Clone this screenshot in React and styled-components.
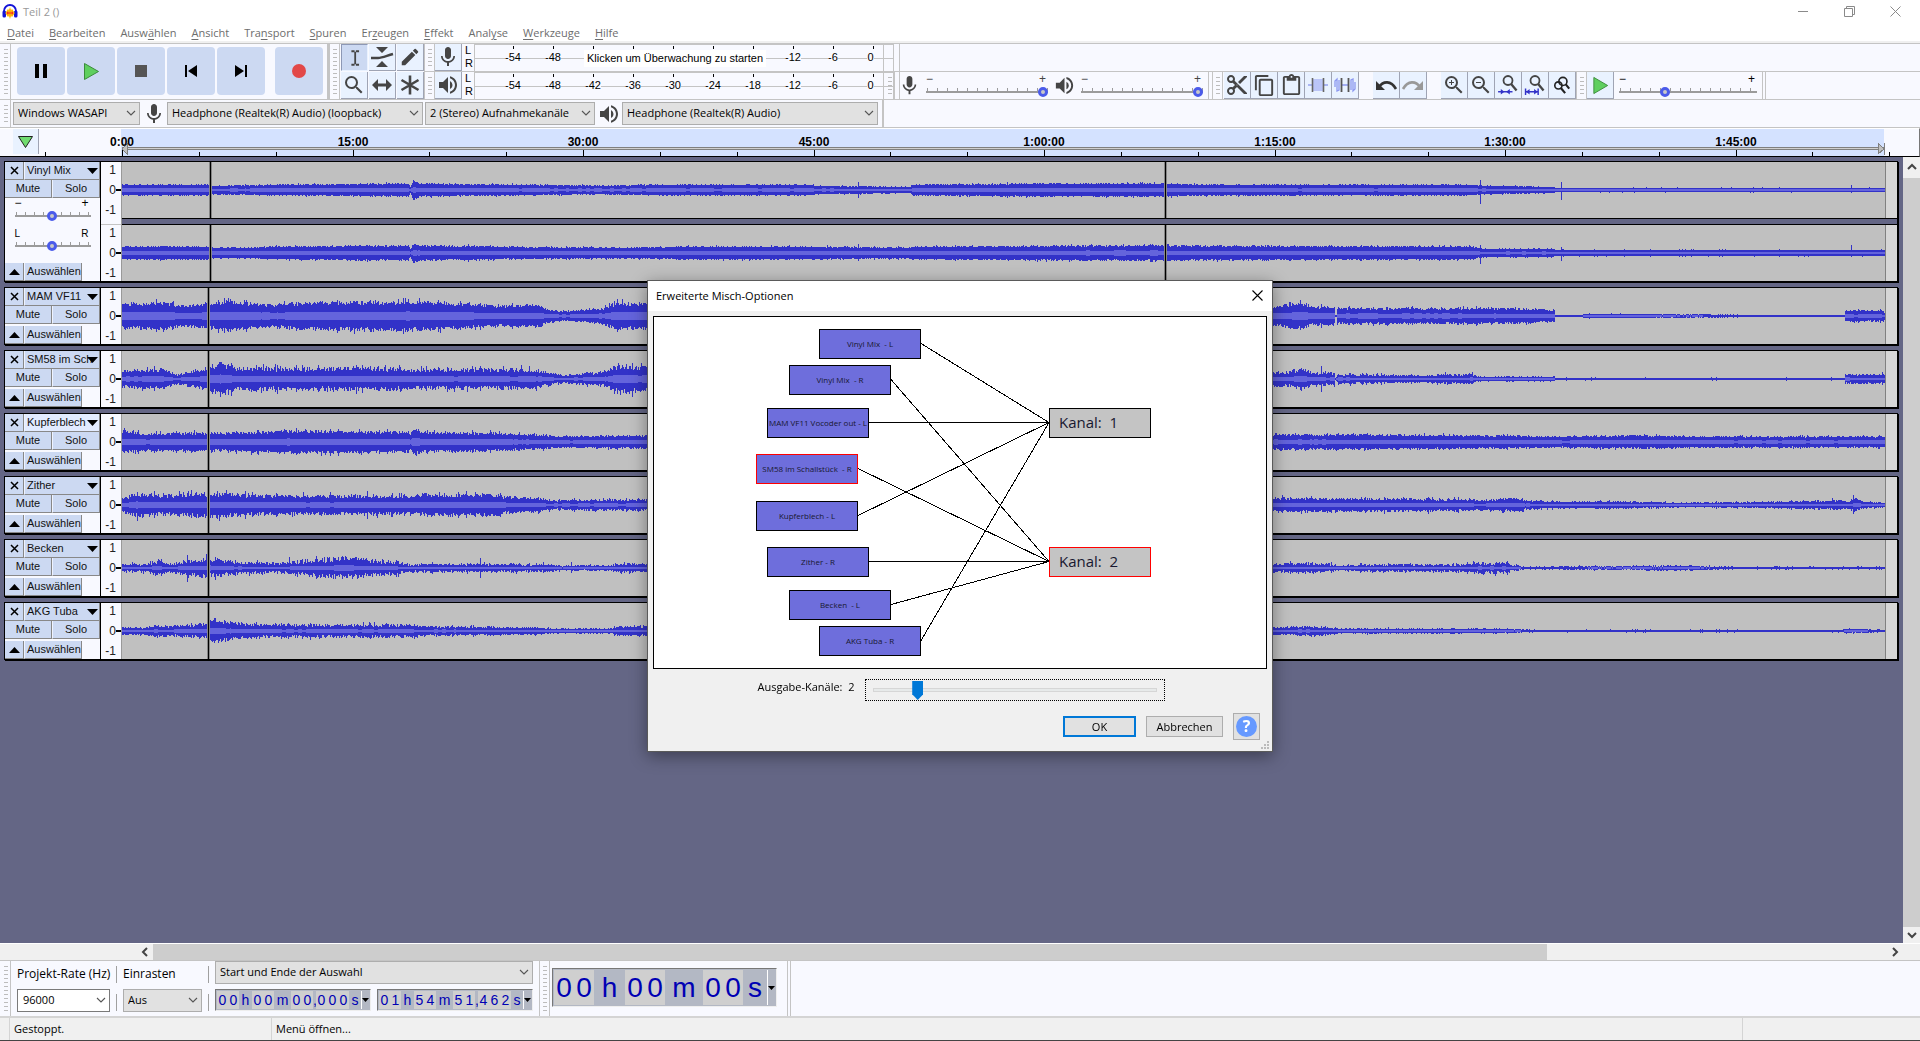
import React from 'react';
import styled, { createGlobalStyle, css } from 'styled-components';
import {
  MdMic,
  MdVolumeUp,
  MdContentCut,
  MdContentCopy,
  MdContentPaste,
  MdZoomIn,
  MdZoomOut,
  MdSearch,
  MdEdit,
} from 'react-icons/md';

const UI = '"Open Sans", "Noto Sans", sans-serif';
const SANS = '"Liberation Sans", Arial, sans-serif';

const LINE = '#c4c4c4';
const PANEL = '#f8f9ff';
const BUTTON = '#ccd9f2';
const SLATE = '#646685';
const ICON = '#454545';

const GlobalStyle = createGlobalStyle`
  *, *::before, *::after { box-sizing: border-box; }
  body {
    margin: 0;
    font-family: ${UI};
    font-size: 11px;
    color: #000;
    overflow: hidden;
  }
  button, input, select {
    font: inherit;
    color: inherit;
    margin: 0;
    padding: 0;
    border: 0;
    background: none;
    border-radius: 0;
  }
  svg { display: block; flex: none; }
`;

/* ---------- window ---------- */

const Window = styled.div`
  display: flex;
  flex-direction: column;
  height: 100vh;
  background: #fff;
  border-bottom: 1px solid #444;
`;

const TitleBar = styled.header`
  display: flex;
  align-items: center;
  gap: 5px;
  height: 24px;
  padding: 0 0 2px 2px;
  color: #999;
`;

const WindowButtons = styled.div`
  display: flex;
  margin-left: auto;
  padding-right: 2px;
`;

const WindowButton = styled.button`
  display: flex;
  align-items: center;
  justify-content: center;
  width: 46px;
  height: 22px;
  color: #8a8a8a;
`;

const MenuBar = styled.nav`
  display: flex;
  gap: 1px;
  height: 19px;
  border-bottom: 2px solid #f0f0f0;
`;

const MenuItem = styled.button`
  padding: 0 7px;
  line-height: 17px;
  color: #6d6d6d;
  u { text-underline-offset: 2px; }
`;

/* ---------- toolbar dock ---------- */

const Dock = styled.div`
  display: flex;
  height: 85px;
  background: ${PANEL};
  border-top: 1px solid ${LINE};
  border-bottom: 1px solid ${LINE};
`;

const LeftDock = styled.div`
  display: flex;
  flex-direction: column;
  flex: none;
  width: 884px;
  border-right: 1px solid ${LINE};
`;

const DockRow = styled.div`
  display: flex;
  height: ${p => p.$height}px;
  border-bottom: ${p => (p.$last ? 'none' : `1px solid ${LINE}`)};
`;

const RightDock = styled.div`
  flex: 1;
  display: grid;
  grid-template-rows: 27px 29px 27px;
`;

const MiddleRow = styled.div`
  display: flex;
  border-top: 1px solid ${LINE};
  border-bottom: 1px solid ${LINE};
`;

const Grabber = styled.div`
  flex: none;
  width: 11px;
  border-right: 1px solid ${LINE};
  border-left: 1px solid ${p => (p.$first ? 'transparent' : LINE)};
  background: repeating-linear-gradient(#bcbcbc 0 1px, transparent 1px 4px) center / 4px calc(100% - 10px) no-repeat;
`;

const Transport = styled.div`
  display: flex;
  align-items: center;
  gap: 2px;
  padding: 0 4px 1px 6px;
  border-right: 2px solid ${LINE};
`;

const TransportButton = styled.button`
  display: flex;
  align-items: center;
  justify-content: center;
  width: 48px;
  height: 48px;
  margin-left: ${p => (p.$apart ? 8 : 0)}px;
  border-radius: 4px;
  background: ${BUTTON};
`;

const Tools = styled.div`
  display: grid;
  grid-template-columns: repeat(3, 27px);
  grid-template-rows: repeat(2, 27px);
  gap: 1px;
  padding-left: 1px;
`;

const ToolButton = styled.button`
  display: flex;
  align-items: center;
  justify-content: center;
  flex: none;
  width: 27px;
  height: 27px;
  color: ${ICON};
  background: ${p => (p.$active ? BUTTON : '#e9f2ff')};
  border-right: 1px solid #9fa4b4;
  border-bottom: 1px solid #9fa4b4;
  ${p => p.$active && css`
    border: 1px solid #8d98b5;
    border-right-color: #e9f2ff;
    border-bottom-color: #e9f2ff;
  `}
`;

const Meters = styled.div`
  flex: 1;
  display: flex;
  flex-direction: column;
  border-right: 1px solid ${LINE};
`;

const MeterRow = styled.div`
  display: flex;
  height: 28px;
  padding-right: 5px;
  border-bottom: ${p => (p.$last ? 'none' : `1px solid ${LINE}`)};
`;

const MeterSide = styled.div`
  display: flex;
  flex-direction: column;
  width: 12px;
  padding-left: 3px;
  font: 11px/13px ${SANS};
`;

const MeterBox = styled.div`
  position: relative;
  flex: 1;
  border-left: 1px solid ${LINE};
  border-right: 1px solid ${LINE};
  border-top: 1px solid ${LINE};
  background: linear-gradient(${LINE}, ${LINE}) 0 13px / 100% 1px no-repeat;
`;

const MeterScale = styled.div`
  display: grid;
  grid-template-columns: repeat(10, 40px);
  padding-left: 18px;
  font: 11px/16px ${SANS};
  text-align: center;
`;

const MeterMark = styled.span`
  display: flex;
  flex-direction: column;
  align-items: center;
  &::before {
    content: '';
    width: 1px;
    height: 3px;
    margin-top: 1px;
    background: #000;
  }
  span { background: ${PANEL}; line-height: 11px; margin-top: 3px; }
  &:last-child span { margin-right: 5px; }
`;

const MeterHint = styled.button`
  position: absolute;
  left: 109px;
  top: 5px;
  width: 182px;
  height: 17px;
  background: #fff;
  font: 11px/15px ${SANS};
`;

const DeviceRow = styled.div`
  display: flex;
  align-items: center;
  flex: 1;
  padding: 0 3px 0 2px;
  border-right: 1px solid ${LINE};
`;

const DeviceIcon = styled.span`
  display: flex;
  justify-content: center;
  width: ${p => p.$width}px;
  color: ${ICON};
`;

/* ---------- form controls ---------- */

const SelectWrap = styled.span`
  position: relative;
  display: block;
  flex: none;
  width: ${p => p.$width}px;
  svg {
    position: absolute;
    right: 4px;
    top: 8px;
    pointer-events: none;
  }
`;

const fieldStyle = css`
  appearance: none;
  display: block;
  width: 100%;
  height: 23px;
  padding: 0 18px 1px 4px;
  line-height: 20px;
  border: 1px solid #adadad;
  background: #e1e1e1;
`;

const SelectBox = styled.select`
  ${fieldStyle}
`;

const ComboInput = styled.input`
  ${fieldStyle}
  padding: 0 18px 2px 5px;
  border-color: #7a7a7a;
  background: #fff;
`;

const SliderWrap = styled.label`
  display: flex;
  flex-direction: column;
  width: ${p => p.$width}px;
  height: 23px;
`;

const SliderEnds = styled.span`
  display: flex;
  justify-content: space-between;
  height: 11px;
  padding: 0 2px 0 0;
  font: ${p => (p.$letters ? 10 : 12)}px/11px ${SANS};
`;

const Range = styled.input`
  appearance: none;
  display: block;
  width: 100%;
  height: 12px;
  background:
    linear-gradient(#9b9b9b, #9b9b9b) 0 6px / 100% 2px no-repeat,
    repeating-linear-gradient(90deg, #9b9b9b 0 1px, transparent 1px ${p => p.$pitch}px) 1px 3px / 100% 4px no-repeat;
  &::-webkit-slider-thumb {
    appearance: none;
    width: 10px;
    height: 10px;
    margin-top: 2px;
    border: 3px solid #4b5bea;
    border-radius: 5px;
    background: #c8c8c8;
  }
`;

function Chevron() {
  return (
    <svg width="10" height="7" viewBox="0 0 10 7">
      <path d="M1 1l4 4 4-4" fill="none" stroke="#555" strokeWidth="1.1" />
    </svg>
  );
}

function Select({ label, width, children }) {
  return (
    <SelectWrap $width={width}>
      <SelectBox aria-label={label}>
        <option>{children}</option>
      </SelectBox>
      <Chevron />
    </SelectWrap>
  );
}

function Slider({ label, width, pitch, value, ends = ['−', '+'] }) {
  return (
    <SliderWrap $width={width}>
      <SliderEnds $letters={ends[0] === 'L'}>
        <span>{ends[0]}</span>
        <span>{ends[1]}</span>
      </SliderEnds>
      <Range type="range" aria-label={label} $pitch={pitch} defaultValue={value} />
    </SliderWrap>
  );
}

/* ---------- icons ---------- */

function AppIcon() {
  return (
    <svg width="16" height="16" viewBox="0 0 16 16">
      <path d="M2 10V8a6 6 0 0 1 12 0v2" fill="none" stroke="#1414d8" strokeWidth="1.8" />
      <rect x="0.5" y="7.5" width="3.5" height="7" rx="1.5" fill="#1414d8" />
      <rect x="12" y="7.5" width="3.5" height="7" rx="1.5" fill="#1414d8" />
      <path d="M4 10l2-3 1 2 1-3 1 3 1-2 2 3-2 3-1-2-1 3-1-3-1 2z" fill="#f22" stroke="#fb0" strokeWidth="1.2" />
    </svg>
  );
}

const transportIcons = {
  pause: <path d="M1 0h4v14H1zM9 0h4v14H9z" fill="#000" />,
  play: <path d="M0.5 -0.5l14 8-14 8z" fill="#5fcf5f" stroke="#3c8c3c" />,
  stop: <path d="M1 1h12v12H1z" fill="#555" />,
  start: <path d="M1 1h2v12H1zM13 1v12L4 7z" fill="#000" />,
  end: <path d="M11 1h2v12h-2zM1 1v12l9-6z" fill="#000" />,
  record: <circle cx="7" cy="7" r="7" fill="#e24848" />,
};

function TransportIcon({ name }) {
  return (
    <svg width="14" height="14" viewBox="0 0 14 14" overflow="visible">
      {transportIcons[name]}
    </svg>
  );
}

const drawings = {
  ibeam: (
    <path d="M6 2.5h3.5M11 2.5h3.5M6 17.5h3.5M11 17.5h3.5M10.2 3v14" fill="none" stroke={ICON} strokeWidth="2" />
  ),
  envelope: (
    <g fill={ICON}>
      <path d="M4 0h12l-6 6zM4 20h12l-6-6z" />
      <path d="M-1 11h7c4 0 8-2 15-4" fill="none" stroke={ICON} strokeWidth="2.4" />
    </g>
  ),
  shift: <path d="M0 10l6-6v4.5h8V4l6 6-6 6v-4.5H6V16z" fill={ICON} />,
  multi: (
    <path d="M10 0.5v19M1.5 5l17 10M18.5 5l-17 10" fill="none" stroke={ICON} strokeWidth="2.6" />
  ),
  trim: (
    <g fill="none">
      <path d="M0 10h4M16 10h4" stroke="#6a78e6" />
      <path d="M6 4v12M8 4v12M10 4v12M12 4v12M14 4v12" stroke="#8c98f0" />
      <path d="M4.5 3v14M15.5 3v14" stroke="#666" strokeWidth="1.6" />
    </g>
  ),
  silence: (
    <g fill="none">
      <path d="M0 12V6l2-2v12l2-1V5M16 15V5l2-1v12l2-2V7M7 10h6" stroke="#8c98f0" strokeWidth="1.3" />
      <path d="M6.5 3v14M13.5 3v14" stroke="#555" strokeWidth="1.8" />
    </g>
  ),
  undo: (
    <g>
      <path d="M3 12c4-6 12-7 17 2" fill="none" stroke="#333" strokeWidth="2.6" />
      <path d="M0 6v9h9z" fill="#333" />
    </g>
  ),
  redo: (
    <g>
      <path d="M17 12C13 6 5 5 0 14" fill="none" stroke="#999" strokeWidth="2.6" />
      <path d="M20 6v9h-9z" fill="#999" />
    </g>
  ),
  fitSelection: (
    <g fill="none">
      <circle cx="10" cy="5" r="5" stroke={ICON} strokeWidth="2" />
      <path d="M13.5 9l6 7" stroke={ICON} strokeWidth="2.6" />
      <path d="M-1 17.5h16" stroke="#3232c8" strokeWidth="1.6" />
      <path d="M2 14.5v6l4-3zM12 14.5v6l-4-3z" fill="#3232c8" />
    </g>
  ),
  fitProject: (
    <g fill="none">
      <circle cx="10" cy="5" r="5" stroke={ICON} strokeWidth="2" />
      <path d="M13.5 9l6 7" stroke={ICON} strokeWidth="2.6" />
      <path d="M0 17.5h13M-0.5 14v7M13.5 14v7" stroke="#3232c8" strokeWidth="1.6" />
      <path d="M4 14.5v6l-4-3zM9 14.5v6l4-3z" fill="#3232c8" />
    </g>
  ),
  zoomToggle: (
    <g fill="none" stroke="#222" strokeWidth="1.8">
      <circle cx="6" cy="10.5" r="4" />
      <circle cx="11" cy="6" r="4.5" />
      <path d="M14 9l4 5M8.5 13l5 6" strokeWidth="2.4" />
    </g>
  ),
  play: <path d="M3 1.5l14.5 8.5L3 18.5z" fill="#5fcf5f" stroke="#3c8c3c" />,
};

function Drawing({ name, size = 20 }) {
  return (
    <svg width={size} height={size} viewBox="0 0 20 20" overflow="visible">
      {drawings[name]}
    </svg>
  );
}

/* ---------- time ruler ---------- */

const RulerRow = styled.div`
  display: flex;
  height: 29px;
  background: ${PANEL};
  border-top: 1px solid #fff;
  border-bottom: 1px solid #000;
  border-right: 1px solid #777;
`;

const PinButton = styled.button`
  display: flex;
  align-items: center;
  justify-content: center;
  width: 26px;
  height: 25px;
  margin-left: 13px;
  background: #e9f2ff;
  border-right: 1px solid #9fa4b4;
`;

const hours = ['0:00', '15:00', '30:00', '45:00', '1:00:00', '1:15:00', '1:30:00', '1:45:00'];
const tickX = i => Math.round(83 + i * 76.84);

function TimeRuler() {
  return (
    <svg width="1860" height="27" fontFamily={SANS} fontSize="12" fontWeight="bold" shapeRendering="crispEdges">
      <rect x="82" y="0" width="1763" height="27" fill="#d4e2ff" />
      <rect x="83" y="18" width="1762" height="3" fill="#808080" />
      <rect x="83" y="19" width="1762" height="1" fill="#d0d0d0" />
      <path d="M88 15v10l-5-5zM1839 14v11l6-5z" fill="#c0c0c0" stroke="#808080" />
      <path d="M1845 14v12" stroke="#808080" />
      {Array.from({ length: 25 }, (_, n) => n - 1).map(i => (
        <rect key={i} x={tickX(i)} y={i % 3 === 0 ? 21 : 23} width="1" height={i % 3 === 0 ? 6 : 4} />
      ))}
      {hours.map((h, i) => (
        <text key={h} x={tickX(i * 3)} y="17" textAnchor="middle">{h}</text>
      ))}
    </svg>
  );
}

/* ---------- tracks ---------- */

const Workspace = styled.main`
  display: flex;
  flex: 1;
  min-height: 0;
  background: ${SLATE};
`;

const TrackList = styled.div`
  flex: 1;
  min-width: 0;
  display: flex;
  flex-direction: column;
  gap: 5px;
  padding: 4px 5px 0 4px;
`;

const TrackBox = styled.section`
  display: flex;
  border: 1px solid #000;
  box-shadow: 1px 1px 0 #000;
`;

const TrackPanel = styled.div`
  display: flex;
  flex-direction: column;
  flex: none;
  width: 96px;
  background: ${PANEL};
  border-right: 1px solid #000;
  font: 11px/17px ${SANS};
`;

const TrackRow = styled.div`
  display: flex;
  height: 18px;
  margin-top: ${p => (p.$bottom ? 'auto' : 0)};
`;

const TrackButton = styled.button`
  display: flex;
  align-items: center;
  justify-content: ${p => (p.$left ? 'flex-start' : 'center')};
  flex: ${p => (p.$width ? 'none' : 1)};
  width: ${p => p.$width || 0}px;
  min-width: 0;
  padding-left: ${p => (p.$left ? 2 : 0)}px;
  white-space: nowrap;
  color: #111;
  background: ${p => (p.$hover ? '#e2ebff' : BUTTON)};
  border-right: 1px solid #888;
  border-bottom: 1px solid #888;
  & + & { border-left: 1px solid #eef3ff; }
`;

const TrackName = styled.span`
  flex: 1;
  min-width: 0;
  text-align: left;
`;

const TrackSliders = styled.div`
  display: flex;
  flex-direction: column;
  align-items: center;
  gap: 7px;
  height: 65px;
`;

const VerticalRulers = styled.div`
  flex: none;
  width: 21px;
  background: ${PANEL};
  border-right: 1px solid #999;
`;

const VerticalRuler = styled.div`
  display: grid;
  grid-template-rows: 16px 24px 16px;
  align-items: center;
  height: 56px;
  padding-right: 5px;
  text-align: right;
  font: 12px/14px ${SANS};
  color: #222;
  & + & { margin-top: 6px; border-top: 1px solid ${LINE}; height: 57px; }
`;

const ZeroMark = styled.span`
  display: flex;
  align-items: center;
  justify-content: flex-end;
  margin-right: -5px;
  &::after {
    content: '';
    width: 5px;
    height: 2px;
    background: #000;
  }
`;

const Channels = styled.div`
  flex: 1;
  min-width: 0;
  display: flex;
  flex-direction: column;
  gap: 5px;
  background: ${SLATE};
`;

const Channel = styled.div`
  display: flex;
  height: ${p => (p.$stereo ? 57 : 56)}px;
  background: #d6d6d6;
  border-top: ${p => (p.$stereo && p.$second ? '1px solid #000' : 'none')};
  border-bottom: ${p => (p.$stereo && !p.$second ? '1px solid #000' : 'none')};
`;

const Clip = styled.div`
  flex: 1;
  min-width: 0;
  margin-right: 11px;
  background: #c0c0c0;
  border-right: 1px solid #808080;
`;

const WAVE_WIDTH = 1763;
const MID = 28;

// breakpoints are [x, amplitude], spikes are [x, up, down], all in clip pixels
const tracks = [
  {
    name: 'Vinyl Mix',
    stereo: true,
    rough: 0.25,
    cuts: [88, 1043],
    channels: [
      {
        points: [[0, 5], [86, 5], [92, 4], [150, 5], [280, 6], [286, 6], [288, 3], [291, 9], [298, 6], [400, 5], [480, 4], [530, 5], [690, 5], [692, 4], [788, 3], [790, 5], [900, 6], [1040, 6], [1100, 5], [1348, 5], [1360, 4], [1431, 3], [1433, 2], [1763, 2]],
        spikes: [[736, 8, 8], [1358, 10, 14], [1439, 8, 10], [1729, 5, 3]],
      },
      {
        points: [[0, 6], [86, 6], [92, 5], [130, 5], [150, 6], [286, 7], [288, 4], [291, 9], [298, 7], [360, 6], [500, 5], [560, 6], [690, 6], [788, 5], [790, 6], [1000, 7], [1348, 6], [1360, 4], [1431, 4], [1433, 3], [1763, 3]],
        spikes: [[346, 9, 9], [736, 9, 8], [1347, 8, 6], [1358, 8, 11], [1439, 6, 8], [1729, 8, 4]],
      },
    ],
  },
  {
    name: 'MAM VF11',
    rough: 0.35,
    cuts: [86],
    channels: [{
      points: [[0, 11], [40, 12], [60, 9], [86, 11], [100, 13], [150, 10], [180, 12], [284, 13], [340, 11], [380, 9], [416, 10], [422, 7], [440, 4], [480, 7], [495, 12], [525, 11], [800, 8], [1150, 8], [1180, 12], [1190, 8], [1212, 8], [1213, 1], [1214, 1], [1215, 7], [1300, 7], [1370, 7], [1420, 6], [1432, 5], [1433, 1], [1460, 1], [1461, 2], [1660, 1], [1722, 1], [1723, 5], [1761, 5], [1763, 1]],
      spikes: [[1199, 12, 12]],
    }],
  },
  {
    name: 'SM58 im Schallstück',
    label: 'SM58 im Sch',
    rough: 0.55,
    cuts: [86],
    channels: [{
      points: [[0, 7], [40, 8], [55, 4], [85, 9], [98, 13], [115, 9], [200, 9], [270, 9], [300, 8], [410, 8], [430, 5], [440, 3], [480, 6], [497, 12], [525, 10], [800, 6], [1165, 6], [1180, 9], [1190, 5], [1212, 5], [1213, 1], [1216, 4], [1300, 3], [1325, 4], [1350, 4], [1355, 2], [1432, 2], [1433, 1], [1722, 1], [1723, 4], [1761, 4], [1763, 1]],
      spikes: [[263, 14, 8], [332, 9, 13], [1199, 13, 13], [1323, 7, 5]],
    }],
  },
  {
    name: 'Kupferblech',
    hover: true,
    rough: 0.35,
    cuts: [86],
    channels: [{
      points: [[0, 10], [20, 8], [100, 8], [170, 10], [286, 9], [288, 6], [291, 12], [300, 9], [380, 8], [440, 5], [525, 6], [1150, 7], [1350, 6], [1440, 5], [1520, 6], [1570, 5], [1763, 5]],
      spikes: [[72, 12, 10]],
    }],
  },
  {
    name: 'Zither',
    rough: 0.5,
    cuts: [86],
    channels: [{
      points: [[0, 6], [15, 10], [40, 8], [86, 10], [150, 8], [280, 8], [300, 9], [378, 9], [382, 7], [415, 6], [430, 4], [525, 5], [1150, 6], [1350, 5], [1354, 4], [1400, 6], [1403, 4], [1430, 3], [1500, 3], [1560, 2], [1660, 3], [1720, 4], [1726, 3], [1733, 6], [1740, 3], [1763, 2]],
      spikes: [[245, 14, 14], [300, 12, 7], [1731, 10, 9], [1710, 7, 4]],
    }],
  },
  {
    name: 'Becken',
    rough: 0.8,
    cuts: [86],
    channels: [{
      points: [[0, 3], [25, 3], [35, 6], [45, 3], [60, 5], [86, 7], [100, 6], [120, 4], [160, 4], [180, 6], [225, 8], [284, 4], [286, 3], [420, 3], [440, 2], [490, 2], [500, 4], [525, 3], [1150, 3], [1180, 4], [1212, 3], [1216, 2], [1260, 3], [1350, 3], [1352, 4], [1385, 4], [1390, 2], [1395, 2], [1402, 1], [1560, 2], [1610, 1], [1763, 1]],
      spikes: [[65, 13, 14], [358, 10, 10], [167, 11, 6], [219, 11, 7], [449, 6, 5], [1351, 7, 4], [1266, 5, 4]],
    }],
  },
  {
    name: 'AKG Tuba',
    rough: 0.6,
    cuts: [86],
    channels: [{
      points: [[0, 3], [20, 3], [35, 5], [50, 4], [84, 6], [90, 10], [110, 7], [150, 5], [260, 5], [290, 5], [300, 4], [416, 3], [425, 2], [485, 2], [498, 4], [525, 4], [1150, 3], [1180, 4], [1212, 3], [1216, 2], [1370, 2], [1420, 1], [1720, 1], [1723, 2], [1763, 1]],
      spikes: [[92, 13, 12], [264, 8, 7], [1199, 5, 5]],
    }],
  },
];

const noise = n => {
  const v = Math.sin(n * 12.9898) * 43758.5453;
  return v - Math.floor(v);
};

function buildWave({ points, spikes }, seed, rough) {
  let outer = '';
  let inner = '';
  let p = 0;
  for (let x = 0; x < WAVE_WIDTH; x++) {
    while (p < points.length - 2 && x >= points[p + 1][0]) p++;
    const [x0, a0] = points[p];
    const [x1, a1] = points[p + 1];
    const amp = a0 + ((a1 - a0) * (x - x0)) / (x1 - x0);
    const bump = noise(x + seed * 71) > 0.9 ? amp * rough * 0.6 : 0;
    let up = Math.max(1, Math.round(amp * (1 - rough / 3 + rough * noise(x * 3 + seed)) + bump));
    let down = Math.max(1, Math.round(amp * (1 - rough / 3 + rough * noise(x * 5 + seed * 9)) + bump));
    const spike = spikes.find(s => s[0] === x);
    if (spike) {
      up = spike[1];
      down = spike[2];
    }
    outer += `M${x} ${MID - up}h1v${up + down}h-1z`;
    const core = Math.max(1, Math.round(amp * 0.34 + (noise(Math.floor(x / 4) + seed * 3) - 0.5) * 0.5));
    if (amp > 1.4 && core < up) {
      inner += `M${x} ${MID - core}h1v${2 * core}h-1z`;
    }
  }
  return { outer, inner };
}

function Waveform({ channel, track, seed }) {
  const wave = buildWave(channel, seed, track.rough);
  return (
    <svg width="100%" height="56" viewBox="0 0 1763 56" preserveAspectRatio="none" shapeRendering="crispEdges">
      <path d={wave.outer} fill="#3232c8" />
      <path d={wave.inner} fill="#6464dc" />
      {track.cuts.map(x => (
        <g key={x}>
          <rect x={x - 1} y="0" width="3" height="56" fill="#858585" />
          <rect x={x} y="0" width="1" height="56" fill="#000" />
        </g>
      ))}
    </svg>
  );
}

function Track({ track, index }) {
  return (
    <TrackBox>
      <TrackPanel>
        <TrackRow>
          <TrackButton $width={19} aria-label="Spur schließen">
            <svg width="9" height="9" viewBox="0 0 9 9">
              <path d="M1 1l7 7M8 1l-7 7" stroke="#000" strokeWidth="1.5" />
            </svg>
          </TrackButton>
          <TrackButton $left $hover={track.hover}>
            <TrackName>{track.label || track.name}</TrackName>
            <svg width="13" height="6" viewBox="0 0 13 6">
              <path d="M1 0h11L6.500 6z" />
            </svg>
          </TrackButton>
        </TrackRow>
        <TrackRow>
          <TrackButton>Mute</TrackButton>
          <TrackButton>Solo</TrackButton>
        </TrackRow>
        {track.stereo && (
          <TrackSliders>
            <Slider label="Verstärkung" width={76} pitch={9} value={49} />
            <Slider label="Balance" width={76} pitch={9} value={49} ends={['L', 'R']} />
          </TrackSliders>
        )}
        <TrackRow $bottom>
          <TrackButton $width={19} aria-label="Zusammenklappen">
            <svg width="11" height="6" viewBox="0 0 11 6">
              <path d="M0 6h11L5.500 0z" />
            </svg>
          </TrackButton>
          <TrackButton $width={58} $left>Auswählen</TrackButton>
        </TrackRow>
      </TrackPanel>
      <VerticalRulers>
        {track.channels.map((c, i) => (
          <VerticalRuler key={i}>
            <span>1</span>
            <ZeroMark>0</ZeroMark>
            <span>-1</span>
          </VerticalRuler>
        ))}
      </VerticalRulers>
      <Channels>
        {track.channels.map((c, i) => (
          <Channel key={i} $stereo={track.stereo} $second={i === 1}>
            <Clip>
              <Waveform channel={c} track={track} seed={index * 2 + i + 1} />
            </Clip>
          </Channel>
        ))}
      </Channels>
    </TrackBox>
  );
}

/* ---------- scroll bars ---------- */

const VScroll = styled.div`
  display: flex;
  flex-direction: column;
  flex: none;
  width: 17px;
  background: #f0f0f0;
`;

const HScroll = styled.div`
  display: flex;
  height: 17px;
  padding-left: 136px;
  background: #f0f0f0;
  border-top: 1px solid #fff;
`;

const ScrollArrow = styled.button`
  display: flex;
  align-items: center;
  justify-content: center;
  flex: none;
  width: 17px;
  height: ${p => (p.$tall ? 21 : 16)}px;
`;

const ScrollThumb = styled.div`
  flex: ${p => p.$grow};
  background: #cdcdcd;
`;

const ScrollRest = styled.div`
  flex: ${p => p.$grow};
`;

const arrows = { up: 'M1 6l4-4 4 4', down: 'M1 3l4 4 4-4', left: 'M7 1l-4 4 4 4', right: 'M3 1l4 4-4 4' };

function Arrow({ dir }) {
  return (
    <svg width="10" height="10" viewBox="0 0 10 10">
      <path d={arrows[dir]} fill="none" stroke="#444" strokeWidth="2" />
    </svg>
  );
}

/* ---------- selection bar ---------- */

const BottomBar = styled.div`
  display: flex;
  height: 58px;
  background: ${PANEL};
  border-top: 1px solid ${LINE};
  border-bottom: 2px solid #d4d4d4;
`;

const SelectionGrid = styled.div`
  display: grid;
  grid-template-columns: 93px 13px 79px 13px 318px;
  grid-template-rows: 28px 27px;
  padding: 0 6px;
  font-size: 12px;
  line-height: 26px;
  white-space: nowrap;
  ${SelectBox}, ${ComboInput} { font-size: 11px; }
`;

const Divider = styled.span`
  width: 1px;
  height: 17px;
  margin: 5px 6px;
  background: #a0a0a0;
`;

const TimePair = styled.div`
  display: flex;
  justify-content: space-between;
  align-items: start;
`;

const TimeField = styled.div`
  display: flex;
  height: ${p => p.$size + 8}px;
  border: 1px solid #777;
  border-right-color: #eee;
  border-bottom-color: #eee;
  padding: 1px;
  background: #b3b8c4;
  color: #0000b4;
  font: ${p => (p.$big ? 28 : 14)}px/${p => p.$size + 4}px ${SANS};
`;

const Cell = styled.span`
  width: ${p => p.$width}px;
  text-align: center;
  background: ${p => (p.$digit ? '#cfcfcf' : 'none')};
`;

const TimeMenu = styled.button`
  display: flex;
  align-items: center;
  justify-content: center;
  width: 8px;
  border-left: 1px solid #fff;
  background: #b3b8c4;
`;

const TimeBar = styled.div`
  display: flex;
  align-items: center;
  padding: 0 10px 2px 2px;
  border-right: 1px solid ${LINE};
`;

const BarEnd = styled.div`
  width: 3px;
  border-right: 1px solid ${LINE};
`;

function Time({ text, size, big, digit, unit }) {
  return (
    <TimeField $size={size} $big={big}>
      {text.split('').map((ch, i) => {
        const isDigit = /\d/.test(ch);
        return (
          <Cell key={i} $digit={isDigit} $width={isDigit ? digit : unit[ch]}>{ch}</Cell>
        );
      })}
      <TimeMenu aria-label="Zeitformat">
        <svg width="7" height="4" viewBox="0 0 7 4"><path d="M0 0h7L3.500 4z" /></svg>
      </TimeMenu>
    </TimeField>
  );
}

const smallUnits = { h: 13, m: 17, ',': 3, s: 12 };
const bigUnits = { h: 31, m: 38, s: 24 };

const StatusBar = styled.footer`
  display: grid;
  grid-template-columns: 9px 262px 1fr 178px;
  height: 22px;
  background: #f0f0f0;
  line-height: 21px;
`;

const StatusCell = styled.span`
  padding-left: 4px;
  border-left: 1px solid #d4d4d4;
  &:first-child { border: 0; }
`;

/* ---------- mixing dialog ---------- */

const Overlay = styled.div`
  position: fixed;
  inset: 0;
  display: flex;
  justify-content: center;
  align-items: flex-start;
  padding-top: 280px;
`;

const Dialog = styled.div`
  position: relative;
  width: 626px;
  background: #f0f0f0;
  border: 1px solid #5a5a5a;
  box-shadow: 0 4px 16px rgba(0, 0, 0, 0.4);
`;

const DialogTitle = styled.div`
  display: flex;
  align-items: center;
  justify-content: space-between;
  height: 30px;
  padding: 0 9px 2px 8px;
  background: #fff;
`;

const DialogClose = styled.button`
  width: 11px;
  height: 11px;
`;

const MixCanvas = styled.div`
  position: relative;
  height: 353px;
  margin: 5px 5px 0;
  border: 1px solid #000;
  background: #fff;
`;

const MixLines = styled.svg`
  width: 100%;
  height: 100%;
`;

const MixNode = styled.button`
  position: absolute;
  left: ${p => p.$x}px;
  top: ${p => p.$y}px;
  width: 102px;
  height: 30px;
  white-space: pre;
  font-size: ${p => (p.$output ? 15 : 8)}px;
  text-align: ${p => (p.$output ? 'left' : 'center')};
  padding: 0 0 2px ${p => (p.$output ? 9 : 0)}px;
  color: #181830;
  background: ${p => (p.$output ? '#c4c4c4' : '#6e6edc')};
  border: 1px solid ${p => (p.$selected ? '#f00' : '#000')};
`;

const ChannelRow = styled.div`
  display: flex;
  justify-content: center;
  gap: 10px;
  padding: 10px 0 0 2px;
  height: 44px;
  label { line-height: 15px; white-space: pre; }
`;

const ChannelRange = styled.input`
  appearance: none;
  width: 300px;
  height: 22px;
  padding: 0 8px;
  outline: 1px dotted #000;
  outline-offset: -1px;
  &::-webkit-slider-runnable-track {
    height: 4px;
    border: 1px solid #d6d6d6;
    background: #e7eaea;
  }
  &::-webkit-slider-thumb {
    appearance: none;
    width: 11px;
    height: 19px;
    margin-top: -8px;
    background: #0078d7;
    clip-path: polygon(0 0, 100% 0, 100% 70%, 50% 100%, 0 70%);
  }
`;

const DialogButtons = styled.div`
  display: flex;
  align-items: center;
  justify-content: flex-end;
  gap: 10px;
  padding: 0 12px 11px 0;
`;

const DialogButton = styled.button`
  width: ${p => p.$width}px;
  height: 21px;
  line-height: 15px;
  background: #e1e1e1;
  border: ${p => (p.$primary ? '2px solid #0078d7' : '1px solid #adadad')};
`;

const HelpButton = styled.button`
  width: 27px;
  height: 27px;
  padding: 2px;
  background: #e1e1e1;
  border: 1px solid #adadad;
  span {
    display: block;
    height: 21px;
    border-radius: 50%;
    background: #6699ff;
    color: #fff;
    font: bold 16px/21px ${UI};
  }
`;

const Grip = styled.svg`
  position: absolute;
  right: 3px;
  bottom: 2px;
`;

const inputs = [
  { name: 'Vinyl Mix  - L', x: 165, y: 12, out: 0 },
  { name: 'Vinyl Mix  - R', x: 135, y: 48, out: 1 },
  { name: 'MAM VF11 Vocoder out - L', x: 113, y: 91, out: 0 },
  { name: 'SM58 im Schallstück  - R', x: 102, y: 137, out: 1, selected: true },
  { name: 'Kupferblech - L', x: 102, y: 184, out: 0 },
  { name: 'Zither - R', x: 113, y: 230, out: 1 },
  { name: 'Becken  - L', x: 135, y: 273, out: 1 },
  { name: 'AKG Tuba - R', x: 165, y: 309, out: 0 },
];

const outputs = [
  { name: 'Kanal:  1', x: 395, y: 91 },
  { name: 'Kanal:  2', x: 395, y: 230, selected: true },
];

function MixDialog() {
  return (
    <Overlay>
      <Dialog role="dialog" aria-labelledby="mix-title">
        <DialogTitle>
          <span id="mix-title">Erweiterte Misch-Optionen</span>
          <DialogClose aria-label="Schließen">
            <svg width="11" height="11" viewBox="0 0 11 11">
              <path d="M0.500 0.500l10 10M10.500 0.500l-10 10" stroke="#000" strokeWidth="1.1" />
            </svg>
          </DialogClose>
        </DialogTitle>
        <MixCanvas>
          <MixLines>
            {inputs.map(n => (
              <line
                key={n.name}
                x1={n.x + 102}
                y1={n.y + 14.5}
                x2={outputs[n.out].x}
                y2={outputs[n.out].y + 14.5}
                stroke="#000"
                shapeRendering="crispEdges"
              />
            ))}
          </MixLines>
          {inputs.map(n => (
            <MixNode key={n.name} $x={n.x} $y={n.y} $selected={n.selected}>{n.name}</MixNode>
          ))}
          {outputs.map(n => (
            <MixNode key={n.name} $output $x={n.x} $y={n.y} $selected={n.selected}>{n.name}</MixNode>
          ))}
        </MixCanvas>
        <ChannelRow>
          <label htmlFor="channels">Ausgabe-Kanäle:  2</label>
          <ChannelRange id="channels" type="range" min="1" max="8" defaultValue="2" />
        </ChannelRow>
        <DialogButtons>
          <DialogButton $primary $width={73}>OK</DialogButton>
          <DialogButton $width={77}>Abbrechen</DialogButton>
          <HelpButton aria-label="Hilfe"><span>?</span></HelpButton>
        </DialogButtons>
        <Grip width="8" height="8" viewBox="0 0 8 8" fill="#bbb">
          <path d="M6 0h2v2H6zM6 3h2v2H6zM3 3h2v2H3zM6 6h2v2H6zM3 6h2v2H3zM0 6h2v2H0z" />
        </Grip>
      </Dialog>
    </Overlay>
  );
}

/* ---------- page ---------- */

// the underscore stands before the accelerator key
const menus = ['_Datei', '_Bearbeiten', 'Ausw_ählen', '_Ansicht', 'Tra_nsport', '_Spuren', 'Er_zeugen', '_Effekt', 'Anal_yse', '_Werkzeuge', '_Hilfe'];

function Menu({ text }) {
  const [before, rest] = text.split('_');
  return <MenuItem>{before}<u>{rest[0]}</u>{rest.slice(1)}</MenuItem>;
}

const marks = [-54, -48, -42, -36, -30, -24, -18, -12, -6, 0];

function Meter({ icon, label, hint, last }) {
  return (
    <MeterRow $last={last}>
      <Grabber />
      <ToolButton aria-label={label}>{icon}</ToolButton>
      <MeterSide><span>L</span><span>R</span></MeterSide>
      <MeterBox>
        <MeterScale>
          {marks.map(m => (
            <MeterMark key={m}>
              {(!hint || m < -42 || m > -18) && <span>{m}</span>}
            </MeterMark>
          ))}
        </MeterScale>
        {hint && <MeterHint>{hint}</MeterHint>}
      </MeterBox>
    </MeterRow>
  );
}

const MixerGroup = styled.div`
  display: flex;
  align-items: center;
  gap: 5px;
  padding: 0 5px 0 3px;
  margin-right: 3px;
  border-right: 1px solid ${LINE};
  color: ${ICON};
`;

const EditGroup = styled.div`
  display: flex;
  gap: 14px;
  padding-left: 1px;
`;

const ButtonRun = styled.div`
  display: flex;
`;

const SpeedGroup = styled.div`
  display: flex;
  align-items: center;
  gap: 5px;
  padding-right: 5px;
  border-right: 1px solid ${LINE};
`;

export default function App() {
  return (
    <Window>
      <GlobalStyle />
      <TitleBar>
        <AppIcon />
        <span>Teil 2 ()</span>
        <WindowButtons>
          <WindowButton aria-label="Minimieren">
            <svg width="10" height="10"><path d="M0 5.500h10" stroke="currentColor" /></svg>
          </WindowButton>
          <WindowButton aria-label="Verkleinern">
            <svg width="11" height="11" fill="none" stroke="currentColor">
              <path d="M0.500 2.500h8v8h-8zM2.500 2.500v-2h8v8h-2" />
            </svg>
          </WindowButton>
          <WindowButton aria-label="Schließen">
            <svg width="11" height="11"><path d="M0.500 0.500l10 10M10.500 0.500l-10 10" stroke="currentColor" /></svg>
          </WindowButton>
        </WindowButtons>
      </TitleBar>
      <MenuBar>
        {menus.map(m => <Menu key={m} text={m} />)}
      </MenuBar>

      <Dock>
        <LeftDock>
          <DockRow $height={56}>
            <Grabber $first />
            <Transport>
              <TransportButton aria-label="Pause"><TransportIcon name="pause" /></TransportButton>
              <TransportButton aria-label="Wiedergabe"><TransportIcon name="play" /></TransportButton>
              <TransportButton aria-label="Stopp"><TransportIcon name="stop" /></TransportButton>
              <TransportButton aria-label="Zum Anfang"><TransportIcon name="start" /></TransportButton>
              <TransportButton aria-label="Zum Ende"><TransportIcon name="end" /></TransportButton>
              <TransportButton aria-label="Aufnahme" $apart><TransportIcon name="record" /></TransportButton>
            </Transport>
            <Grabber />
            <Tools>
              <ToolButton $active aria-label="Auswahl"><Drawing name="ibeam" size={18} /></ToolButton>
              <ToolButton aria-label="Hüllkurve"><Drawing name="envelope" /></ToolButton>
              <ToolButton aria-label="Zeichnen"><MdEdit size={22} /></ToolButton>
              <ToolButton aria-label="Zoom"><MdSearch size={24} /></ToolButton>
              <ToolButton aria-label="Verschieben"><Drawing name="shift" /></ToolButton>
              <ToolButton aria-label="Multi"><Drawing name="multi" /></ToolButton>
            </Tools>
            <Meters>
              <Meter icon={<MdMic size={24} />} label="Aufnahmepegel" hint="Klicken um Überwachung zu starten" />
              <Meter icon={<MdVolumeUp size={24} />} label="Wiedergabepegel" last />
            </Meters>
          </DockRow>
          <DockRow $height={27} $last>
            <Grabber $first />
            <DeviceRow>
              <Select label="Host" width={127}>Windows WASAPI</Select>
              <DeviceIcon $width={27}><MdMic size={24} /></DeviceIcon>
              <Select label="Aufnahmegerät" width={256}>Headphone (Realtek(R) Audio) (loopback)</Select>
              <DeviceIcon $width={2} />
              <Select label="Aufnahmekanäle" width={170}>2 (Stereo) Aufnahmekanäle</Select>
              <DeviceIcon $width={27}><MdVolumeUp size={24} /></DeviceIcon>
              <Select label="Wiedergabegerät" width={256}>Headphone (Realtek(R) Audio)</Select>
            </DeviceRow>
          </DockRow>
        </LeftDock>
        <RightDock>
          <span />
          <MiddleRow>
            <Grabber $first />
            <MixerGroup>
              <MdMic size={23} />
              <Slider label="Aufnahmelautstärke" width={122} pitch={10} value={100} />
              <MdVolumeUp size={23} />
              <Slider label="Wiedergabelautstärke" width={122} pitch={10} value={100} />
            </MixerGroup>
            <Grabber />
            <EditGroup>
              <ButtonRun>
                <ToolButton aria-label="Ausschneiden"><MdContentCut size={24} /></ToolButton>
                <ToolButton aria-label="Kopieren"><MdContentCopy size={23} /></ToolButton>
                <ToolButton aria-label="Einfügen"><MdContentPaste size={23} /></ToolButton>
                <ToolButton aria-label="Trimmen"><Drawing name="trim" /></ToolButton>
                <ToolButton aria-label="Stille"><Drawing name="silence" /></ToolButton>
              </ButtonRun>
              <ButtonRun>
                <ToolButton aria-label="Rückgängig"><Drawing name="undo" /></ToolButton>
                <ToolButton aria-label="Wiederherstellen"><Drawing name="redo" /></ToolButton>
              </ButtonRun>
              <ButtonRun>
                <ToolButton aria-label="Vergrößern"><MdZoomIn size={24} /></ToolButton>
                <ToolButton aria-label="Verkleinern"><MdZoomOut size={24} /></ToolButton>
                <ToolButton aria-label="Auswahl einpassen"><Drawing name="fitSelection" size={18} /></ToolButton>
                <ToolButton aria-label="Projekt einpassen"><Drawing name="fitProject" size={18} /></ToolButton>
                <ToolButton aria-label="Zoom umschalten"><Drawing name="zoomToggle" size={18} /></ToolButton>
              </ButtonRun>
            </EditGroup>
            <Grabber />
            <SpeedGroup>
              <ToolButton aria-label="Mit Tempo abspielen"><Drawing name="play" size={19} /></ToolButton>
              <Slider label="Wiedergabetempo" width={138} pitch={10} value={32} />
            </SpeedGroup>
            <BarEnd />
          </MiddleRow>
        </RightDock>
      </Dock>

      <RulerRow>
        <PinButton aria-label="Abspielposition">
          <svg width="17" height="14" viewBox="0 0 17 14">
            <path d="M1.500 1.500h14l-7 11z" fill="#6fdc6f" stroke="#222" />
          </svg>
        </PinButton>
        <TimeRuler />
      </RulerRow>

      <Workspace>
        <TrackList>
          {tracks.map((t, i) => <Track key={t.name} track={t} index={i} />)}
        </TrackList>
        <VScroll>
          <ScrollArrow $tall aria-label="Nach oben"><Arrow dir="up" /></ScrollArrow>
          <ScrollThumb $grow={1} />
          <ScrollArrow aria-label="Nach unten"><Arrow dir="down" /></ScrollArrow>
        </VScroll>
      </Workspace>
      <HScroll>
        <ScrollArrow aria-label="Nach links"><Arrow dir="left" /></ScrollArrow>
        <ScrollThumb $grow={1394} />
        <ScrollRest $grow={339} />
        <ScrollArrow aria-label="Nach rechts"><Arrow dir="right" /></ScrollArrow>
        <DeviceIcon $width={17} />
      </HScroll>

      <BottomBar>
        <Grabber $first />
        <SelectionGrid>
          <label htmlFor="rate">Projekt-Rate (Hz)</label>
          <Divider />
          <span>Einrasten</span>
          <Divider />
          <Select label="Auswahlmodus" width={318}>Start und Ende der Auswahl</Select>
          <SelectWrap $width={93}>
            <ComboInput id="rate" defaultValue="96000" />
            <Chevron />
          </SelectWrap>
          <Divider />
          <Select label="Einrasten" width={79}>Aus</Select>
          <Divider />
          <TimePair>
            <Time text="00h00m00,000s" size={14} digit={11} unit={smallUnits} />
            <Time text="01h54m51,462s" size={14} digit={11} unit={smallUnits} />
          </TimePair>
        </SelectionGrid>
        <Grabber />
        <TimeBar>
          <Time text="00h00m00s" size={31} big digit={20} unit={bigUnits} />
        </TimeBar>
        <BarEnd />
      </BottomBar>

      <StatusBar>
        <StatusCell />
        <StatusCell>Gestoppt.</StatusCell>
        <StatusCell>Menü öffnen...</StatusCell>
        <StatusCell />
      </StatusBar>

      <MixDialog />
    </Window>
  );
}
